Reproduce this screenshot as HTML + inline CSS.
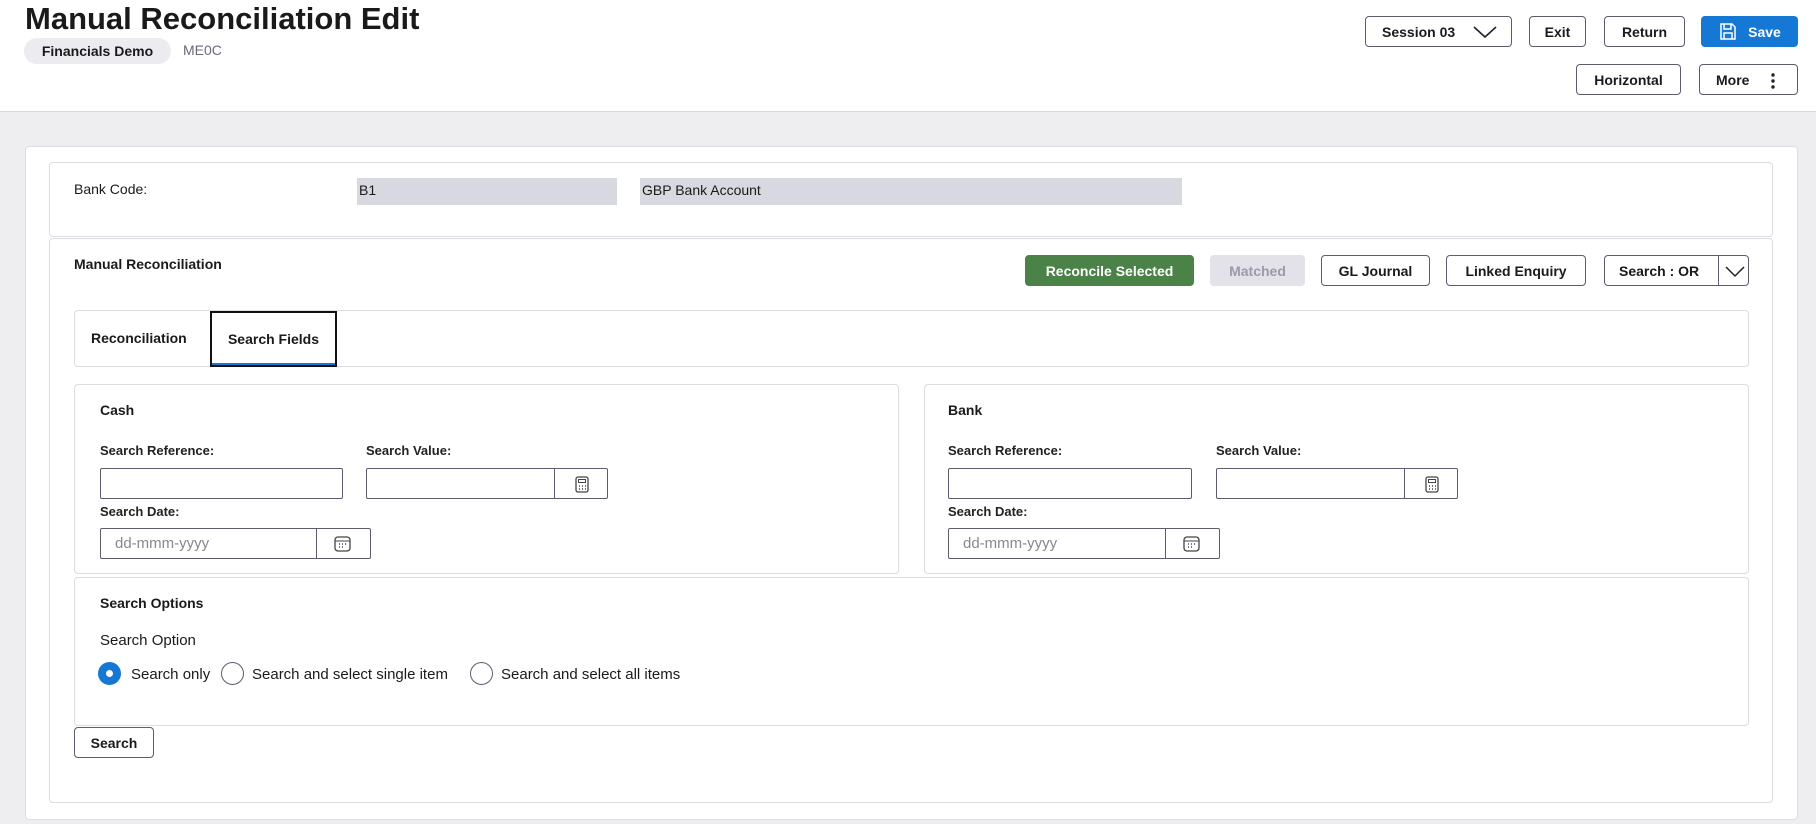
<!DOCTYPE html>
<html><head><meta charset="utf-8"><style>
*{box-sizing:border-box;margin:0;padding:0}
body{width:1816px;height:824px;background:#eeeef0;font-family:"Liberation Sans",sans-serif;color:#1a1a1a;position:relative;overflow:hidden}
.a{position:absolute}
.hdr{left:0;top:0;width:1816px;height:112px;background:#fff;border-bottom:1px solid #d6d6de}
.btn{position:absolute;border:1px solid #5c5c6e;border-radius:4px;background:#fff;font-size:14px;font-weight:bold;display:flex;align-items:center;justify-content:center;color:#1a1a1a}
.box{position:absolute;background:#fff;border:1px solid #dcdce2;border-radius:4px}
.lbl{position:absolute;font-size:13px;font-weight:bold;color:#222}
.inp{position:absolute;border:1px solid #5c5c6e;border-radius:2px;background:#fff}
.div{position:absolute;top:0;bottom:0;border-left:1px solid #5c5c6e}
.t{position:absolute;font-size:15px}
.radio{position:absolute;width:23px;height:23px;border-radius:50%;border:1px solid #5c5c6e;background:#fff}
</style></head><body>
<div class="a hdr"></div>
<div class="a" style="left:25px;top:1px;font-size:31px;font-weight:bold">Manual Reconciliation Edit</div>
<div class="a" style="left:24px;top:38px;width:147px;height:26px;border-radius:13px;background:#ececf0;font-size:14px;font-weight:bold;display:flex;align-items:center;justify-content:center">Financials Demo</div>
<div class="a" style="left:183px;top:42px;font-size:14px;color:#6a6a7a">ME0C</div>

<div class="btn" style="left:1365px;top:16px;width:147px;height:31px;justify-content:flex-start;padding-left:16px">Session 03
<svg class="a" style="left:106px;top:8px" width="26" height="14" viewBox="0 0 26 14"><path d="M2 2 L13 12 L24 2" fill="none" stroke="#222" stroke-width="1.6"/></svg></div>
<div class="btn" style="left:1529px;top:16px;width:57px;height:31px">Exit</div>
<div class="btn" style="left:1604px;top:16px;width:81px;height:31px">Return</div>
<div class="btn" style="left:1701px;top:16px;width:97px;height:31px;background:#1478d4;border-color:#1478d4;color:#fff">
<svg width="20" height="20" viewBox="0 0 20 20" style="margin-right:10px"><path d="M3 2h11l3 3v12H3z M6 2v5h7V2 M6 17v-6h8v6" fill="none" stroke="#fff" stroke-width="1.5"/></svg>Save</div>
<div class="btn" style="left:1576px;top:64px;width:105px;height:31px">Horizontal</div>
<div class="btn" style="left:1699px;top:64px;width:99px;height:31px;justify-content:flex-start;padding-left:16px">More
<svg class="a" style="left:70px;top:7px" width="6" height="18"><circle cx="3" cy="3" r="1.7" fill="#222"/><circle cx="3" cy="9" r="1.7" fill="#222"/><circle cx="3" cy="15" r="1.7" fill="#222"/></svg></div>

<div class="box" style="left:25px;top:146px;width:1773px;height:674px"></div>
<div class="box" style="left:49px;top:162px;width:1724px;height:75px"></div>
<div class="t" style="left:74px;top:181px;font-size:14px">Bank Code:</div>
<div class="a" style="left:357px;top:178px;width:260px;height:27px;background:#d8d8e0;font-size:14px;padding:4px 2px">B1</div>
<div class="a" style="left:640px;top:178px;width:542px;height:27px;background:#d8d8e0;font-size:14px;padding:4px 2px">GBP Bank Account</div>

<div class="box" style="left:49px;top:238px;width:1724px;height:565px"></div>
<div class="t" style="left:74px;top:256px;font-size:14px;font-weight:bold">Manual Reconciliation</div>
<div class="btn" style="left:1025px;top:255px;width:169px;height:31px;background:#4a8247;border-color:#4a8247;color:#fff">Reconcile Selected</div>
<div class="btn" style="left:1210px;top:255px;width:95px;height:31px;background:#e2e2e8;border-color:#e2e2e8;color:#9a9aaa">Matched</div>
<div class="btn" style="left:1321px;top:255px;width:109px;height:31px">GL Journal</div>
<div class="btn" style="left:1446px;top:255px;width:140px;height:31px">Linked Enquiry</div>
<div class="btn" style="left:1604px;top:255px;width:145px;height:31px;justify-content:flex-start;padding-left:14px">Search : OR
<div class="div" style="left:113px"></div>
<svg class="a" style="left:119px;top:9px" width="22" height="13"><path d="M2 2 L11 11 L20 2" fill="none" stroke="#222" stroke-width="1.5"/></svg></div>

<div class="box" style="left:74px;top:310px;width:1675px;height:57px"></div>
<div class="t" style="left:91px;top:330px;font-size:14px;font-weight:bold">Reconciliation</div>
<div class="a" style="left:210px;top:311px;width:127px;height:56px;border:2px solid #111;font-size:14px;font-weight:bold;display:flex;align-items:center;justify-content:center">Search Fields<div class="a" style="left:0;right:0;bottom:0;height:2px;background:#1478d4"></div></div>

<div class="box" style="left:74px;top:384px;width:825px;height:190px"></div>
<div class="box" style="left:924px;top:384px;width:825px;height:190px"></div>
<div class="box" style="left:74px;top:577px;width:1675px;height:149px"></div>

<div class="t" style="left:100px;top:402px;font-weight:bold;font-size:14px">Cash</div>
<div class="lbl" style="left:100px;top:443px">Search Reference:</div>
<div class="inp" style="left:100px;top:468px;width:243px;height:31px"></div>
<div class="lbl" style="left:366px;top:443px">Search Value:</div>
<div class="inp" style="left:366px;top:468px;width:242px;height:31px"><div class="div" style="left:187px"></div>
<svg class="a" style="left:208px;top:7px" width="14" height="17"><rect x="1" y="1" width="12" height="15" rx="2" fill="none" stroke="#444" stroke-width="1.3"/><rect x="3.5" y="3.5" width="7" height="3" fill="none" stroke="#444"/><path d="M4 10h1M7 10h1M10 10h1M4 13h1M7 13h1M10 13h1" stroke="#444" stroke-width="1.5"/></svg></div>
<div class="lbl" style="left:100px;top:504px">Search Date:</div>
<div class="inp" style="left:100px;top:528px;width:271px;height:31px"><div class="t" style="left:14px;top:6px;color:#888">dd-mmm-yyyy</div><div class="div" style="left:215px"></div>
<svg class="a" style="left:233px;top:7px" width="17" height="16"><rect x="1" y="1" width="15" height="14" rx="3" fill="none" stroke="#444" stroke-width="1.3"/><path d="M1 5h15" stroke="#444"/><path d="M5 8h1M8 8h1M11 8h1M5 11h1M8 11h1" stroke="#444" stroke-width="1.5"/></svg></div>

<div class="t" style="left:948px;top:402px;font-weight:bold;font-size:14px">Bank</div>
<div class="lbl" style="left:948px;top:443px">Search Reference:</div>
<div class="inp" style="left:948px;top:468px;width:244px;height:31px"></div>
<div class="lbl" style="left:1216px;top:443px">Search Value:</div>
<div class="inp" style="left:1216px;top:468px;width:242px;height:31px"><div class="div" style="left:187px"></div>
<svg class="a" style="left:208px;top:7px" width="14" height="17"><rect x="1" y="1" width="12" height="15" rx="2" fill="none" stroke="#444" stroke-width="1.3"/><rect x="3.5" y="3.5" width="7" height="3" fill="none" stroke="#444"/><path d="M4 10h1M7 10h1M10 10h1M4 13h1M7 13h1M10 13h1" stroke="#444" stroke-width="1.5"/></svg></div>
<div class="lbl" style="left:948px;top:504px">Search Date:</div>
<div class="inp" style="left:948px;top:528px;width:272px;height:31px"><div class="t" style="left:14px;top:6px;color:#888">dd-mmm-yyyy</div><div class="div" style="left:216px"></div>
<svg class="a" style="left:234px;top:7px" width="17" height="16"><rect x="1" y="1" width="15" height="14" rx="3" fill="none" stroke="#444" stroke-width="1.3"/><path d="M1 5h15" stroke="#444"/><path d="M5 8h1M8 8h1M11 8h1M5 11h1M8 11h1" stroke="#444" stroke-width="1.5"/></svg></div>

<div class="t" style="left:100px;top:595px;font-weight:bold;font-size:14px">Search Options</div>
<div class="t" style="left:100px;top:632px">Search Option</div>
<div class="radio" style="left:98px;top:662px;background:#1478d4;border-color:#1478d4"><div class="a" style="left:7px;top:7px;width:7px;height:7px;border-radius:50%;background:#fff"></div></div>
<div class="t" style="left:131px;top:666px">Search only</div>
<div class="radio" style="left:221px;top:662px"></div>
<div class="t" style="left:252px;top:666px">Search and select single item</div>
<div class="radio" style="left:470px;top:662px"></div>
<div class="t" style="left:501px;top:666px">Search and select all items</div>
<div class="btn" style="left:74px;top:727px;width:80px;height:31px;font-size:14px">Search</div>
</body></html>
